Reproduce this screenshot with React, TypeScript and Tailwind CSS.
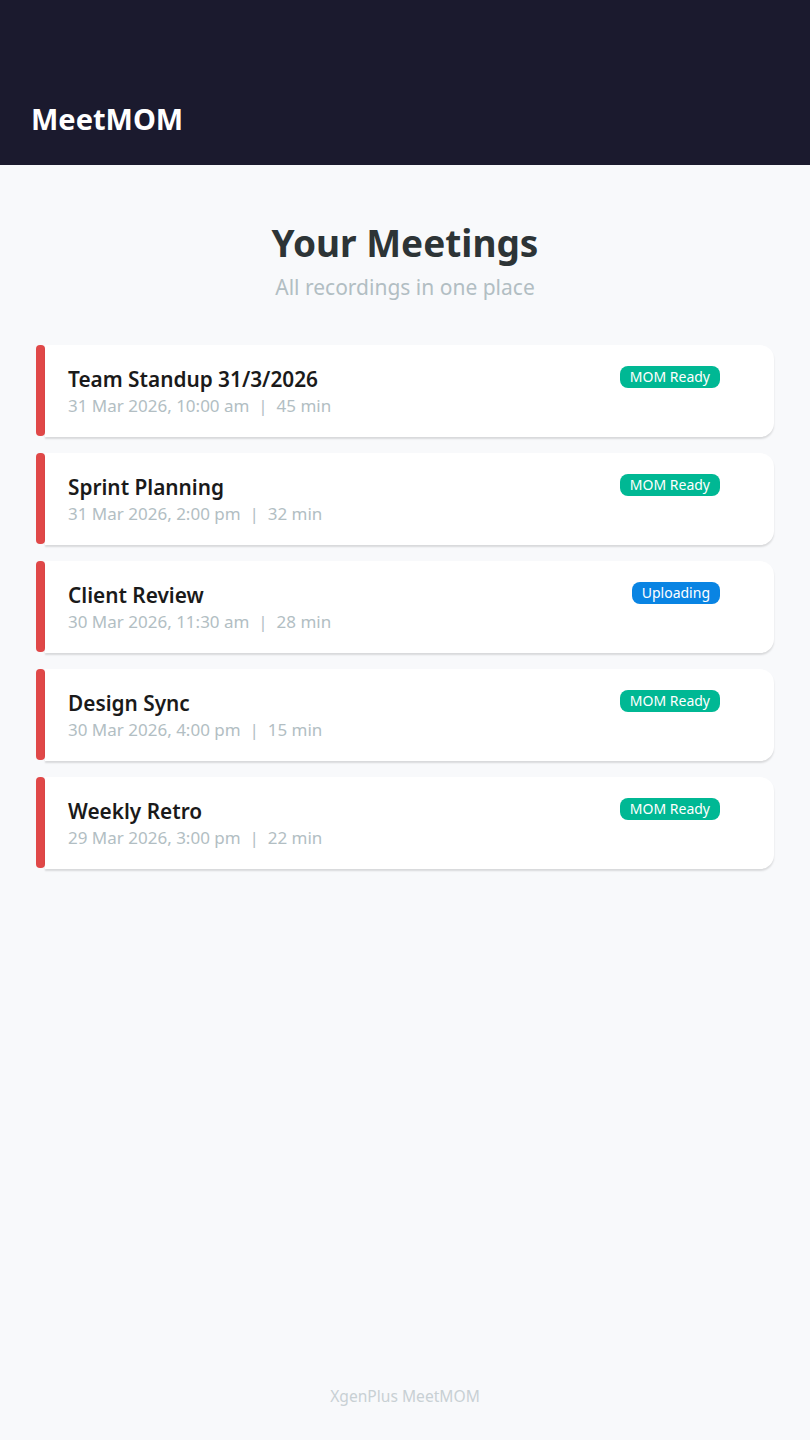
import React from "react";

const meetings = [
  { title: "Team Standup 31/3/2026", date: "31 Mar 2026, 10:00 am", dur: "45 min", status: "ready" },
  { title: "Sprint Planning", date: "31 Mar 2026, 2:00 pm", dur: "32 min", status: "ready" },
  { title: "Client Review", date: "30 Mar 2026, 11:30 am", dur: "28 min", status: "uploading" },
  { title: "Design Sync", date: "30 Mar 2026, 4:00 pm", dur: "15 min", status: "ready" },
  { title: "Weekly Retro", date: "29 Mar 2026, 3:00 pm", dur: "22 min", status: "ready" },
];

export default function App() {
  return (
    <div
      className="min-h-[1440px] w-[810px] bg-[#f8f9fb] flex flex-col"
      style={{ fontFamily: '"Noto Sans", "Open Sans", sans-serif' }}
    >
      <header className="h-[165px] bg-[#1b1a2e] flex items-end px-[31px] pb-[32px]">
        <h1 className="text-[29px] font-bold text-white leading-none">MeetMOM</h1>
      </header>

      <div className="flex flex-col items-center pt-[55px]">
        <h2 className="text-[37px] font-bold text-[#2d3436] leading-[46px]">Your Meetings</h2>
        <p className="text-[21px] text-[#b2bec3] leading-[28px] mt-[7px]">All recordings in one place</p>
      </div>

      <div className="flex flex-col gap-[16px] px-[36px] mt-[44px]">
        {meetings.map((m) => (
          <div key={m.title} className="flex h-[92px]">
            <div className="w-[9px] rounded-[4px] bg-[#e04848] h-[91px]" />
            <div className="flex-1 bg-white rounded-r-[14px] shadow-[0_2px_2px_rgba(0,0,0,0.13)] flex justify-between pl-[23px] pr-[54px] pt-[21px]">
              <div className="flex flex-col">
                <span className="text-[20.8px] font-semibold text-[#1a1a1a] leading-[27px]">{m.title}</span>
                <span className="text-[17px] text-[#b2bec3] leading-[24px] mt-[1px] whitespace-pre">
                  {m.date}  |  {m.dur}
                </span>
              </div>
              <div className="-mt-[2px]">
                {m.status === "ready" ? (
                  <span className="inline-block bg-[#00b894] text-white text-[14px] leading-[22px] h-[22px] px-[10px] rounded-[8px]">
                    MOM Ready
                  </span>
                ) : (
                  <span className="inline-block bg-[#0984e3] text-white text-[14px] leading-[22px] h-[22px] px-[10px] rounded-[8px]">
                    Uploading
                  </span>
                )}
              </div>
            </div>
          </div>
        ))}
      </div>

      <div className="flex-1" />
      <footer className="flex justify-center pb-[32px]">
        <span className="text-[15.6px] text-[#c8d0d4]">XgenPlus MeetMOM</span>
      </footer>
    </div>
  );
}
